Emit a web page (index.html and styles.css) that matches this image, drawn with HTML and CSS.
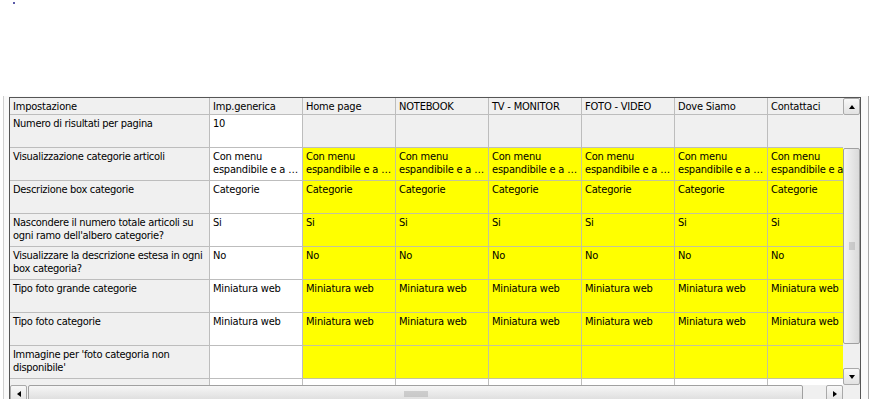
FILE: index.html
```html
<!DOCTYPE html>
<html>
<head>
<meta charset="utf-8">
<link rel="stylesheet" href="styles.css">
</head>
<body>
<div class="dot"></div>
<div class="frame">
  <div class="gridbox">
    <div class="viewport">
      <div class="table">
        <div class="c hd">Impostazione</div>
        <div class="c hd">Imp.generica</div>
        <div class="c hd">Home page</div>
        <div class="c hd">NOTEBOOK</div>
        <div class="c hd">TV - MONITOR</div>
        <div class="c hd">FOTO - VIDEO</div>
        <div class="c hd">Dove Siamo</div>
        <div class="c hd">Contattaci</div>

        <div class="c lb">Numero di risultati per pagina</div>
        <div class="c wh">10</div>
        <div class="c gr"></div><div class="c gr"></div><div class="c gr"></div><div class="c gr"></div><div class="c gr"></div><div class="c gr"></div>

        <div class="c lb">Visualizzazione categorie articoli</div>
        <div class="c wh">Con menu<br>espandibile e a …</div>
        <div class="c ye">Con menu<br>espandibile e a …</div>
        <div class="c ye">Con menu<br>espandibile e a …</div>
        <div class="c ye">Con menu<br>espandibile e a …</div>
        <div class="c ye">Con menu<br>espandibile e a …</div>
        <div class="c ye">Con menu<br>espandibile e a …</div>
        <div class="c ye">Con menu<br>espandibile e a …</div>

        <div class="c lb">Descrizione box categorie</div>
        <div class="c wh">Categorie</div>
        <div class="c ye">Categorie</div><div class="c ye">Categorie</div><div class="c ye">Categorie</div><div class="c ye">Categorie</div><div class="c ye">Categorie</div><div class="c ye">Categorie</div>

        <div class="c lb">Nascondere il numero totale articoli su ogni ramo dell'albero categorie?</div>
        <div class="c wh">Si</div>
        <div class="c ye">Si</div><div class="c ye">Si</div><div class="c ye">Si</div><div class="c ye">Si</div><div class="c ye">Si</div><div class="c ye">Si</div>

        <div class="c lb">Visualizzare la descrizione estesa in ogni box categoria?</div>
        <div class="c wh">No</div>
        <div class="c ye">No</div><div class="c ye">No</div><div class="c ye">No</div><div class="c ye">No</div><div class="c ye">No</div><div class="c ye">No</div>

        <div class="c lb">Tipo foto grande categorie</div>
        <div class="c wh">Miniatura web</div>
        <div class="c ye">Miniatura web</div><div class="c ye">Miniatura web</div><div class="c ye">Miniatura web</div><div class="c ye">Miniatura web</div><div class="c ye">Miniatura web</div><div class="c ye">Miniatura web</div>

        <div class="c lb">Tipo foto categorie</div>
        <div class="c wh">Miniatura web</div>
        <div class="c ye">Miniatura web</div><div class="c ye">Miniatura web</div><div class="c ye">Miniatura web</div><div class="c ye">Miniatura web</div><div class="c ye">Miniatura web</div><div class="c ye">Miniatura web</div>

        <div class="c lb">Immagine per 'foto categoria non disponibile'</div>
        <div class="c wh"></div>
        <div class="c ye"></div><div class="c ye"></div><div class="c ye"></div><div class="c ye"></div><div class="c ye"></div><div class="c ye"></div>

        <div class="c lb"></div>
        <div class="c wh"></div>
        <div class="c wh"></div><div class="c wh"></div><div class="c wh"></div><div class="c wh"></div><div class="c wh"></div><div class="c wh"></div>
      </div>
    </div>
    <div class="vscroll">
      <div class="btn"><span class="tri up"></span></div>
      <div class="track t1"></div>
      <div class="thumb vthumb"><span class="grip vgrip"></span></div>
      <div class="track t2"></div>
      <div class="btn"><span class="tri down"></span></div>
    </div>
    <div class="hscroll">
      <div class="btn"><span class="tri left"></span></div>
      <div class="thumb hthumb"><span class="grip hgrip"></span></div>
      <div class="track t3"></div>
      <div class="btn"><span class="tri right"></span></div>
    </div>
    <div class="corner"></div>
  </div>
</div>
</body>
</html>
```

FILE: styles.css
```css
html, body {
  margin: 0;
  padding: 0;
  background: #ffffff;
  overflow: hidden;
}
body {
  font-family: "DejaVu Sans Condensed", "DejaVu Sans", "Liberation Sans", sans-serif;
  font-size: 11px;
  letter-spacing: -0.2px;
  color: #000;
}
.dot {
  width: 2px;
  height: 2px;
  margin: 2px 0 0 13px;
  background: #5a5aa8;
}
.frame {
  margin: 92px 0 0 3px;
  width: 866px;
  height: 303px;
  box-sizing: border-box;
  border-left: 1px solid #d0d0d0;
  border-right: 1px solid #a8a8a8;
  padding: 1px 0 0 5px;
  background: #fafafa;
}
.gridbox {
  width: 852px;
  height: 310px;
  box-sizing: border-box;
  border: 1px solid #555;
  border-bottom: none;
  display: grid;
  grid-template-columns: 833px 17px;
  grid-template-rows: 287px 17px;
  background: #fff;
}
.viewport {
  overflow: hidden;
  background: #fff;
}
.table {
  display: grid;
  grid-template-columns: 200px repeat(7, 93px);
  grid-template-rows: 17px repeat(9, 33px);
}
.c {
  box-sizing: border-box;
  border-right: 1px solid #bdbdbd;
  border-bottom: 1px solid #bdbdbd;
  padding: 2px 3px 0 3px;
  line-height: 13px;
  white-space: nowrap;
  overflow: hidden;
}
.c.lb {
  white-space: normal;
  background: #f0f0f0;
  padding-right: 0;
  letter-spacing: -0.3px;
}
.hd {
  background: #f0f0f0;
  padding-top: 2px;
}
.wh { background: #ffffff; }
.gr { background: #f0f0f0; }
.ye { background: #ffff00; border-color: #c4c49a; }

.vscroll {
  display: flex;
  flex-direction: column;
  background: #f0f0f0;
}
.hscroll {
  display: flex;
  background: #f0f0f0;
}
.corner {
  background: #f0f0f0;
}
.btn {
  flex: 0 0 17px;
  width: 17px;
  height: 17px;
  box-sizing: border-box;
  border: 1px solid #a9a9a9;
  border-radius: 2px;
  background: linear-gradient(#f8f8f8, #e2e2e2);
  display: flex;
  align-items: center;
  justify-content: center;
}
.tri {
  width: 0;
  height: 0;
  display: block;
}
.tri.up { border-left: 3px solid transparent; border-right: 3px solid transparent; border-bottom: 4px solid #000; }
.tri.down { border-left: 3px solid transparent; border-right: 3px solid transparent; border-top: 4px solid #000; }
.tri.left { border-top: 3px solid transparent; border-bottom: 3px solid transparent; border-right: 4px solid #000; }
.tri.right { border-top: 3px solid transparent; border-bottom: 3px solid transparent; border-left: 4px solid #000; }
.track { background: #f0f0f0; }
.t1 { flex: 0 0 33px; }
.t2 { flex: 1 1 auto; }
.t3 { flex: 1 1 auto; }
.thumb {
  box-sizing: border-box;
  border: 1px solid #a0a0a0;
  border-radius: 2px;
  display: flex;
  align-items: center;
  justify-content: center;
}
.vthumb {
  flex: 0 0 196px;
  background: linear-gradient(to right, #f4f4f4, #dadada);
}
.hthumb {
  flex: 0 0 775px;
  margin-left: 1px;
  background: linear-gradient(#f6f6f6, #dcdcdc);
}
.grip {
  display: block;
  background-image: radial-gradient(circle, #a8a8a8 0.6px, transparent 0.8px);
  background-size: 2px 2px;
}
.vgrip { width: 6px; height: 8px; }
.hgrip { width: 24px; height: 6px; }
```
